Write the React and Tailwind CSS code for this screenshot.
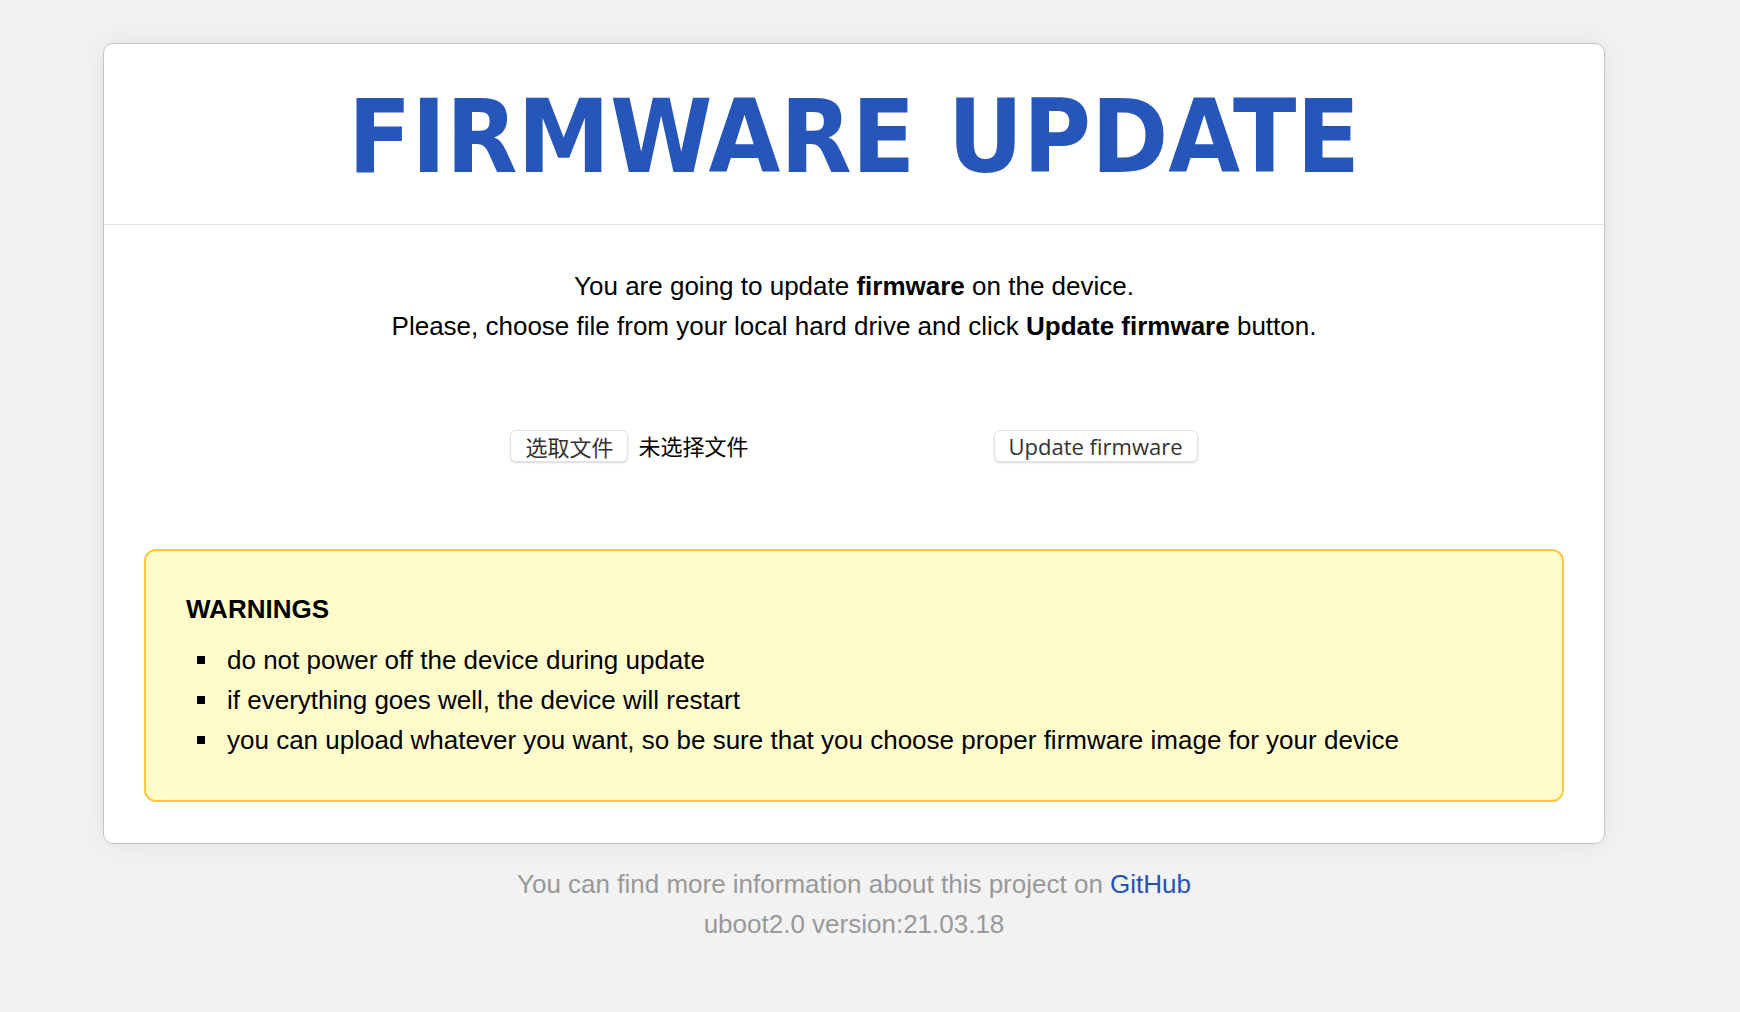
import React from 'react';

const items = [
  'do not power off the device during update',
  'if everything goes well, the device will restart',
  'you can upload whatever you want, so be sure that you choose proper firmware image for your device',
];

function FileRow() {
  return (
    <div className="flex items-center justify-center gap-[245px] mt-[83px]">
      <div className="flex items-center gap-[10px]">
        <button className="h-[32px] px-[14px] bg-white rounded-[6px] border border-[#e2e2e2] shadow-[0_1px_2px_rgba(0,0,0,0.15)] text-[22px] text-[#333] font-['Noto_Sans_CJK_SC',sans-serif] leading-none">
          选取文件
        </button>
        <span className="text-[22px] text-black font-['Noto_Sans_CJK_SC',sans-serif]">未选择文件</span>
      </div>
      <button className="h-[32px] px-[14px] bg-white rounded-[6px] border border-[#e2e2e2] shadow-[0_1px_2px_rgba(0,0,0,0.15)] text-[22px] text-[#333] font-['Open_Sans',sans-serif] leading-none">
        Update firmware
      </button>
    </div>
  );
}

export default function App() {
  return (
    <div className="min-h-screen bg-[#f2f2f2] font-['Liberation_Sans',Arial,sans-serif]">
      <div className="w-[1708px] flex flex-col items-center pt-[43px]">
        <div className="w-[1502px] bg-white border border-[#c4c4c4] rounded-[10px] shadow-[0_0_30px_rgba(0,0,0,0.07)]">
          <div className="h-[181px] border-b border-[#e2e2e2] flex items-center justify-center">
            <h1 className="text-[101px] font-bold text-[#2756bb] font-['DejaVu_Sans',Verdana,sans-serif] leading-none mt-[7px] scale-x-[0.92]">
              FIRMWARE UPDATE
            </h1>
          </div>
          <div className="px-[40px] pt-[41px] pb-[41px]">
            <div className="text-center text-[26px] leading-[40px] text-black">
              <p>You are going to update <b>firmware</b> on the device.</p>
              <p>Please, choose file from your local hard drive and click <b>Update firmware</b> button.</p>
            </div>
            <FileRow />
            <div className="mt-[87px] bg-[#fffccc] border-2 border-[#fdc73f] rounded-[12px] px-[40px] pt-[38px] pb-[40px]">
              <h2 className="text-[26px] font-bold text-black leading-[40px] mb-[11px]">WARNINGS</h2>
              <ul className="flex flex-col">
                {items.map((t) => (
                  <li key={t} className="flex items-center text-[26px] leading-[40px] text-black">
                    <span className="w-[8px] h-[8px] bg-black ml-[11px] mr-[22px] shrink-0" />
                    {t}
                  </li>
                ))}
              </ul>
            </div>
          </div>
        </div>
        <div className="mt-[20px] text-center text-[26px] leading-[40px] text-[#999]">
          <p>
            You can find more information about this project on{' '}
            <a className="text-[#2553b8]" href="#">GitHub</a>
          </p>
          <p>uboot2.0 version:21.03.18</p>
        </div>
      </div>
    </div>
  );
}
